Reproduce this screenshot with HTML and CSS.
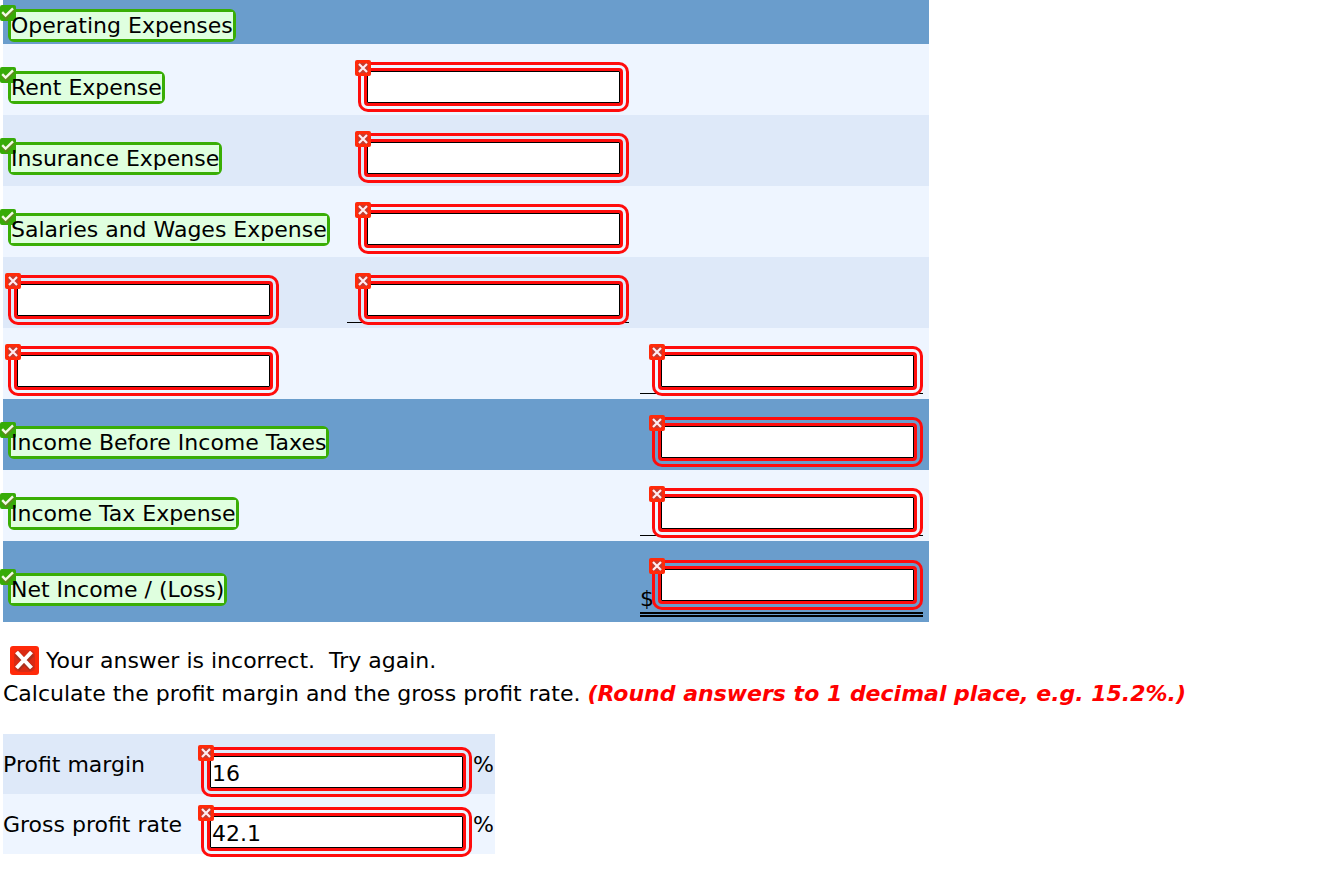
FILE: index.html
```html
<!DOCTYPE html>
<html lang="en">
<head>
    <meta charset="UTF-8">
    <meta name="viewport" content="width=device-width, initial-scale=1.0">
    <title>Income Statement</title>
    <link rel="stylesheet" href="styles.css">
</head>
<body>
    <!-- Shared marks -->
    <svg class="symbols" aria-hidden="true">
        <symbol id="tick" viewBox="0 0 16 16">
            <rect width="16" height="16" rx="2" fill="#37ab08"/>
            <path d="M3 8.5 L6.3 12 L13.3 4.2" fill="none" stroke="#5c8a1c" stroke-width="4"/>
            <path d="M2.2 7.2 L5.6 10.6 L13 3.4" fill="none" stroke="#f3fbe6" stroke-width="2.4"/>
        </symbol>
        <symbol id="cross" viewBox="0 0 16 16">
            <rect width="16" height="16" rx="2" fill="#ff2a0a"/>
            <rect x="3" y="3" width="10" height="10" rx="2" fill="#c83a2c"/>
            <path d="M4 4 L12 12 M12 4 L4 12" fill="none" stroke="#ffeef2" stroke-width="2.2"/>
        </symbol>
        <symbol id="bigcross" viewBox="0 0 29 29">
            <rect width="29" height="29" rx="3" fill="#ff2a0a"/>
            <rect x="4" y="4" width="21" height="22" rx="5" fill="#d92b14"/>
            <path d="M7 8 L22 23 M22 8 L7 23" fill="none" stroke="#a8321f" stroke-width="6"/>
            <path d="M6.5 6 L21.5 22 M21.5 6 L6.5 22" fill="none" stroke="#fff" stroke-width="4"/>
        </symbol>
    </svg>

    <table class="statement">
        <tbody>
            <tr class="dark heading">
                <td class="account"><span class="right"><svg class="mark"><use href="#tick"/></svg>Operating Expenses</span></td>
                <td class="sub"></td>
                <td class="total"></td>
            </tr>
            <tr class="light">
                <td class="account"><span class="right"><svg class="mark"><use href="#tick"/></svg>Rent Expense</span></td>
                <td class="sub"><div class="amount"><span class="wrong"><svg class="mark"><use href="#cross"/></svg><input type="text" aria-label="Rent expense amount"></span></div></td>
                <td class="total"></td>
            </tr>
            <tr class="mid">
                <td class="account"><span class="right"><svg class="mark"><use href="#tick"/></svg>Insurance Expense</span></td>
                <td class="sub"><div class="amount"><span class="wrong"><svg class="mark"><use href="#cross"/></svg><input type="text" aria-label="Insurance expense amount"></span></div></td>
                <td class="total"></td>
            </tr>
            <tr class="light">
                <td class="account"><span class="right"><svg class="mark"><use href="#tick"/></svg>Salaries and Wages Expense</span></td>
                <td class="sub"><div class="amount"><span class="wrong"><svg class="mark"><use href="#cross"/></svg><input type="text" aria-label="Salaries and wages expense amount"></span></div></td>
                <td class="total"></td>
            </tr>
            <tr class="mid">
                <td class="account blank"><span class="wrong"><svg class="mark"><use href="#cross"/></svg><input type="text" aria-label="Account name"></span></td>
                <td class="sub"><div class="amount single"><span class="wrong"><svg class="mark"><use href="#cross"/></svg><input type="text" aria-label="Account amount"></span></div></td>
                <td class="total"></td>
            </tr>
            <tr class="light">
                <td class="account blank"><span class="wrong"><svg class="mark"><use href="#cross"/></svg><input type="text" aria-label="Total name"></span></td>
                <td class="sub"></td>
                <td class="total"><div class="amount single"><span class="wrong"><svg class="mark"><use href="#cross"/></svg><input type="text" aria-label="Total amount"></span></div></td>
            </tr>
            <tr class="dark">
                <td class="account"><span class="right"><svg class="mark"><use href="#tick"/></svg>Income Before Income Taxes</span></td>
                <td class="sub"></td>
                <td class="total"><div class="amount"><span class="wrong"><svg class="mark"><use href="#cross"/></svg><input type="text" aria-label="Income before income taxes"></span></div></td>
            </tr>
            <tr class="light">
                <td class="account"><span class="right"><svg class="mark"><use href="#tick"/></svg>Income Tax Expense</span></td>
                <td class="sub"></td>
                <td class="total"><div class="amount single"><span class="wrong"><svg class="mark"><use href="#cross"/></svg><input type="text" aria-label="Income tax expense"></span></div></td>
            </tr>
            <tr class="dark">
                <td class="account"><span class="right"><svg class="mark"><use href="#tick"/></svg>Net Income / (Loss)</span></td>
                <td class="sub"></td>
                <td class="total"><div class="amount double"><span class="dollar">$</span><span class="wrong"><svg class="mark"><use href="#cross"/></svg><input type="text" aria-label="Net income or loss"></span></div></td>
            </tr>
        </tbody>
    </table>

    <div class="result">
        <svg class="result-icon"><use href="#bigcross"/></svg>
        <span>Your answer is incorrect.&nbsp; Try again.</span>
    </div>
    <p class="question">Calculate the profit margin and the gross profit rate. <strong class="note">(Round answers to 1 decimal place, e.g. 15.2%.)</strong></p>

    <table class="ratios">
        <tbody>
            <tr class="mid">
                <td class="ratio-name"><label for="margin">Profit margin</label></td>
                <td class="ratio-value"><span class="wrong"><svg class="mark"><use href="#cross"/></svg><input type="text" id="margin" value="16"></span></td>
                <td class="percent">%</td>
            </tr>
            <tr class="light">
                <td class="ratio-name"><label for="gross">Gross profit rate</label></td>
                <td class="ratio-value"><span class="wrong"><svg class="mark"><use href="#cross"/></svg><input type="text" id="gross" value="42.1"></span></td>
                <td class="percent">%</td>
            </tr>
        </tbody>
    </table>
</body>
</html>
```
FILE: styles.css
```css
body {
    margin: 0;
    padding: 0 0 24px 3px;
    background-color: #fff;
    color: #000;
    font-family: Verdana, "DejaVu Sans", sans-serif;
    font-size: 22px;
    line-height: 27px;
}
.symbols {
    display: none;
}
table {
    border-collapse: collapse;
}
td {
    padding: 0;
    white-space: nowrap;
}
.dark {
    background-color: #6a9dcc;
}
.light {
    background-color: #eef5ff;
}
.mid {
    background-color: #dee9f9;
}

/* Income statement */
.statement tr {
    height: 71px;
}
.statement .heading {
    height: 44px;
}
.account {
    box-sizing: border-box;
    width: 339px;
    padding: 16px 5px 0;
    vertical-align: middle;
}
.heading .account {
    padding-top: 7px;
}
.blank {
    padding-top: 14px;
}
.sub {
    padding: 18px 5px 5px;
    vertical-align: top;
}
.total {
    padding: 18px 6px 5px;
    vertical-align: top;
}
.heading .sub, .heading .total {
    padding-top: 0;
}
.amount {
    display: flex;
    justify-content: flex-end;
    align-items: flex-end;
    min-width: 283px;
    border-bottom: 1px solid transparent;
}
.sub .amount {
    min-width: 282px;
}
.amount .wrong {
    margin-bottom: -3px;
}
.single {
    border-bottom-color: #000;
}
.double {
    padding-top: 1px;
    border-bottom: 5px double #000;
}
.double .wrong {
    margin-bottom: 2px;
}
.dollar {
    width: 12px;
}

/* Graded answers */
.right, .wrong {
    position: relative;
    display: inline-block;
    vertical-align: top;
}
.right {
    isolation: isolate;
    border: 3px solid #39ae05;
    border-radius: 6px;
}
.right::before {
    content: "";
    position: absolute;
    inset: 0;
    z-index: -1;
    background-color: #dfffdf;
}
.wrong {
    border: 3px solid #ff0c0c;
    border-radius: 10px;
    padding: 3px;
}
.wrong input {
    box-sizing: border-box;
    display: block;
    width: 259px;
    height: 38px;
    margin: 0;
    padding: 2px 2px 0;
    border: 3px solid #ff0c0c;
    border-radius: 4px;
    box-shadow: inset 0 0 0 1px #000;
    background-color: #fff;
    color: #000;
    font-family: inherit;
    font-size: 22px;
}
.mark {
    position: absolute;
    width: 16px;
    height: 16px;
}
.right .mark {
    left: -11px;
    top: -7px;
    z-index: -1;
}
.wrong .mark {
    left: -6px;
    top: -5px;
}

/* Question */
.result {
    display: flex;
    align-items: center;
    gap: 7px;
    margin: 24px 0 5px 7px;
}
.result-icon {
    width: 29px;
    height: 29px;
}
.question {
    margin: 0 0 27px;
}
.note {
    color: #f00;
    font-style: italic;
}

/* Ratios */
.ratios tr {
    height: 60px;
}
.ratio-name {
    width: 198px;
}
.ratio-value {
    padding-top: 13px;
    vertical-align: top;
}
.ratio-value .wrong {
    margin-bottom: -3px;
}
.percent {
    padding: 0 1px;
}
```
